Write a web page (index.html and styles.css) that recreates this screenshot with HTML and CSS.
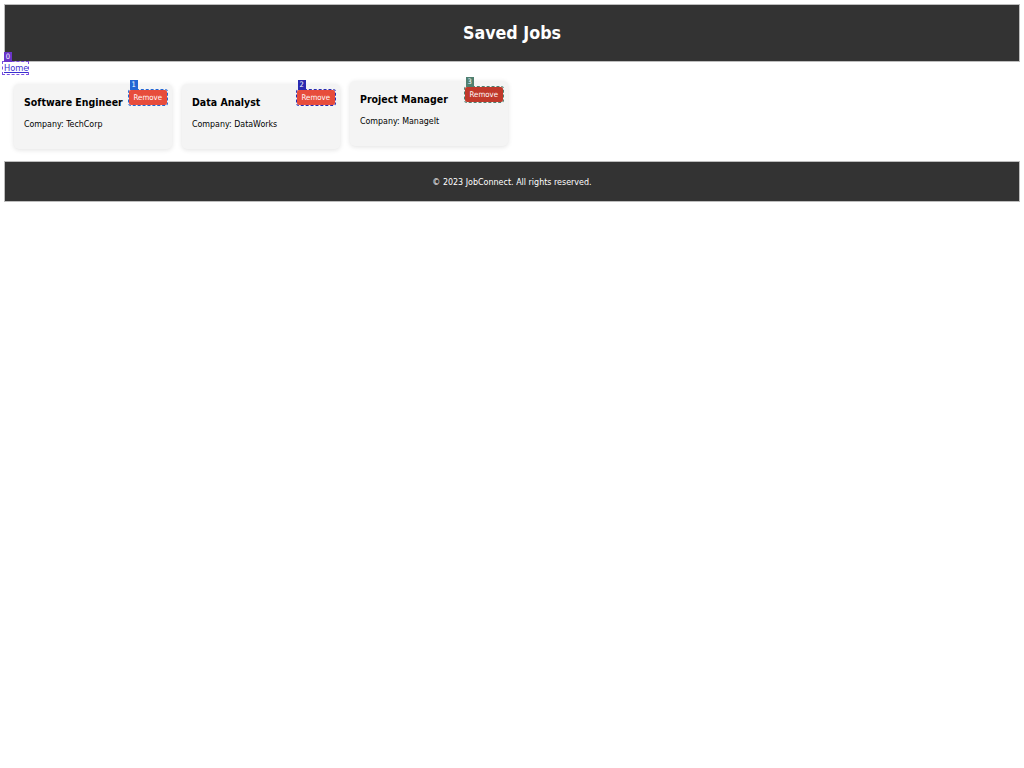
FILE: index.html
```html
<!DOCTYPE html>
<html lang="en">
<head>
<meta charset="utf-8">
<title>Saved Jobs</title>
<link rel="stylesheet" href="styles.css">
</head>
<body>
<header class="site-header">
  <h1 class="site-title">Saved Jobs</h1>
</header>
<nav class="nav">
  <a class="nav-link" href="#"><span class="badge badge-purple">0</span>Home</a>
</nav>
<main class="jobs">
  <div class="job-card">
    <h3 class="job-title">Software Engineer</h3>
    <p class="job-company">Company: TechCorp</p>
    <button class="remove-btn outline-blue"><span class="badge badge-blue">1</span>Remove</button>
  </div>
  <div class="job-card">
    <h3 class="job-title">Data Analyst</h3>
    <p class="job-company">Company: DataWorks</p>
    <button class="remove-btn outline-navy"><span class="badge badge-navy">2</span>Remove</button>
  </div>
  <div class="job-card job-card-raised">
    <h3 class="job-title">Project Manager</h3>
    <p class="job-company">Company: ManageIt</p>
    <button class="remove-btn remove-btn-hover outline-green"><span class="badge badge-green">3</span>Remove</button>
  </div>
</main>
<footer class="site-footer">
  <p class="footer-text">© 2023 JobConnect. All rights reserved.</p>
</footer>
</body>
</html>
```

FILE: styles.css
```css
html, body {
  margin: 0;
  padding: 0;
  background: #fff;
}
body {
  padding: 4px;
  font-family: "DejaVu Sans Condensed", "DejaVu Sans", sans-serif;
  font-size: 10px;
  color: #000;
}
.site-header {
  background: #333;
  height: 58px;
  box-sizing: border-box;
  border: 1px solid #bdbdbd;
  display: flex;
  align-items: center;
  justify-content: center;
}
.site-title {
  margin: 0;
  color: #fff;
  font-size: 17.7px;
  font-weight: bold;
}
.nav {
  height: 12px;
  display: flex;
  align-items: flex-start;
}
.nav-link {
  position: relative;
  color: #3b2fd0;
  font-size: 9.2px;
  line-height: 12px;
  outline: 1px dashed #7b4fe0;
  margin-left: -1px;
  padding: 0 0 0 1px;
}
.badge {
  position: absolute;
  left: 1px;
  top: -10px;
  height: 10px;
  min-width: 8px;
  padding: 0 1px;
  box-sizing: border-box;
  font-size: 7.5px;
  line-height: 10px;
  color: #fff;
  text-align: center;
  text-decoration: none;
  font-weight: normal;
}
.badge-purple { background: #6a35c9; }
.badge-blue { background: #2266d4; }
.badge-navy { background: #2a2ab0; }
.badge-green { background: #4f7f6f; }
.jobs {
  display: flex;
  gap: 10px;
  padding: 10px 10px 12px;
  align-items: flex-start;
}
.job-card {
  position: relative;
  width: 158px;
  height: 65px;
  box-sizing: border-box;
  padding: 10px;
  background: #f4f4f4;
  border-radius: 5px;
  box-shadow: 0 1px 5px rgba(0,0,0,0.12);
}
.job-card-raised {
  margin-top: -3px;
}
.job-title {
  margin: 0;
  font-size: 10.5px;
  line-height: 16px;
  font-weight: bold;
}
.job-company {
  margin: 8px 0 0;
  font-size: 8.8px;
  line-height: 13px;
}
.remove-btn {
  position: absolute;
  top: 6px;
  right: 5px;
  height: 15px;
  padding: 0 5px;
  background: #e74c3c;
  color: #fff;
  border: none;
  border-radius: 2px;
  font-family: "DejaVu Sans Condensed", "DejaVu Sans", sans-serif;
  font-size: 7.8px;
  line-height: 15px;
  cursor: pointer;
}
.remove-btn-hover { background: #c0392b; }
.outline-blue { outline: 1px dashed #2266d4; }
.outline-navy { outline: 1px dashed #2a2ab0; }
.outline-green { outline: 1px dashed #4f7f6f; }
.site-footer {
  background: #333;
  height: 41px;
  box-sizing: border-box;
  border: 1px solid #bdbdbd;
  display: flex;
  align-items: center;
  justify-content: center;
}
.footer-text {
  margin: 0;
  color: #fff;
  font-size: 8.9px;
}
```
